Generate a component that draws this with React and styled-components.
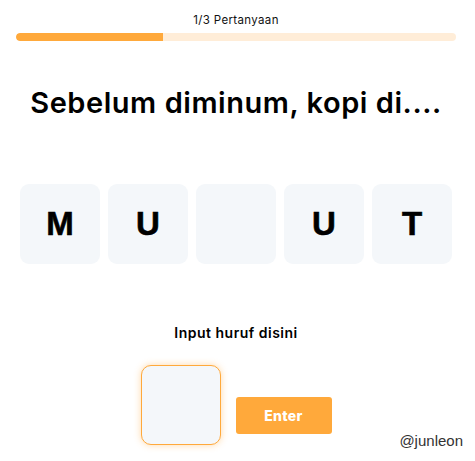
import React from 'react';
import styled, { createGlobalStyle } from 'styled-components';

const GlobalStyle = createGlobalStyle`
  html, body {
    margin: 0;
    padding: 0;
    background: #ffffff;
  }
  body {
    font-family: 'Inter', 'Noto Sans', sans-serif;
    color: #000;
  }
`;

const Page = styled.div`
  position: relative;
  width: 475px;
  height: 461px;
  overflow: hidden;
`;

const Quiz = styled.div`
  width: 440px;
  padding: 13px 16px 0;
  display: flex;
  flex-direction: column;
  align-items: center;
`;

const Counter = styled.div`
  font-size: 11.5px;
  line-height: 14px;
  letter-spacing: 0.35px;
  color: #111;
`;

const Track = styled.div`
  margin-top: 6px;
  width: 100%;
  height: 8px;
  border-radius: 4px;
  background: #ffedd8;
  overflow: hidden;
`;

const Fill = styled.div`
  height: 100%;
  background: #ffa93b;
  border-radius: 4px 0 0 4px;
`;

const Question = styled.h1`
  margin: 44px 0 0;
  font-size: 29px;
  line-height: 36px;
  font-weight: 600;
  letter-spacing: 0.55px;
  white-space: nowrap;
`;

const Tiles = styled.div`
  margin-top: 63px;
  display: flex;
  gap: 8px;
`;

const Tile = styled.div`
  width: 80px;
  height: 80px;
  border-radius: 9px;
  background: #f4f7fa;
  display: flex;
  align-items: center;
  justify-content: center;
  font-family: 'Liberation Sans', Arial, sans-serif;
  font-weight: 700;
  font-size: 33px;
  -webkit-text-stroke: 0.6px #000;
`;

const Label = styled.div`
  margin-top: 60px;
  font-size: 14px;
  line-height: 18px;
  font-weight: 600;
  letter-spacing: 0.5px;
`;

const InputRow = styled.div`
  margin-top: 23px;
  display: flex;
  align-items: flex-start;
  gap: 15px;
`;

const LetterInput = styled.div`
  width: 78px;
  height: 78px;
  border: 1px solid #ffa93b;
  border-radius: 10px;
  background: #f4f7fa;
  box-shadow: 0 0 7px rgba(255, 169, 59, 0.45);
`;

const EnterButton = styled.button`
  margin-top: 32px;
  width: 96px;
  height: 37px;
  border: none;
  border-radius: 3px;
  background: #ffa93b;
  color: #fff;
  font-family: 'Inter', sans-serif;
  font-weight: 800;
  font-size: 14px;
  letter-spacing: 0.3px;
`;

const Credit = styled.div`
  position: absolute;
  right: 12px;
  bottom: 12px;
  font-family: 'Liberation Sans', Arial, sans-serif;
  font-size: 15px;
  color: #333;
`;

const letters = ['M', 'U', '', 'U', 'T'];

export default function App() {
  const progress = 1 / 3;
  return (
    <Page>
      <GlobalStyle />
      <Quiz>
        <Counter>1/3 Pertanyaan</Counter>
        <Track>
          <Fill style={{ width: `${progress * 100}%` }} />
        </Track>
        <Question>Sebelum diminum, kopi di....</Question>
        <Tiles>
          {letters.map((l, i) => (
            <Tile key={i}>{l}</Tile>
          ))}
        </Tiles>
        <Label>Input huruf disini</Label>
        <InputRow>
          <LetterInput />
          <EnterButton>Enter</EnterButton>
        </InputRow>
      </Quiz>
      <Credit>@junleon</Credit>
    </Page>
  );
}
